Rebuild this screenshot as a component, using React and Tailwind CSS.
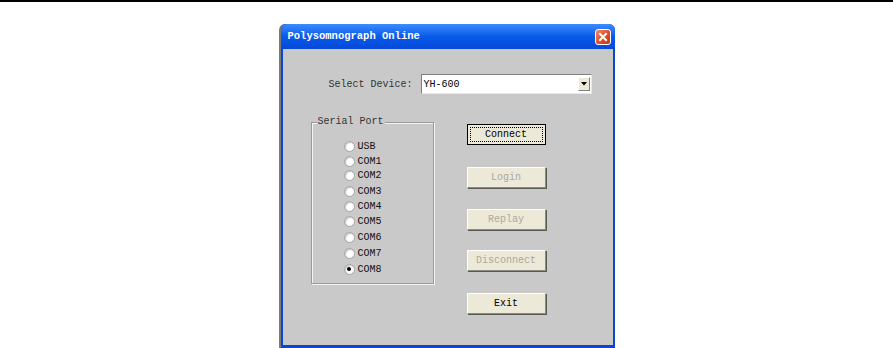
import React from 'react';

const PORTS = [
  { name: 'USB', row: 'h-[15px]' },
  { name: 'COM1', row: 'h-[14px]' },
  { name: 'COM2', row: 'h-[15px]' },
  { name: 'COM3', row: 'h-[16px]' },
  { name: 'COM4', row: 'h-[15px]' },
  { name: 'COM5', row: 'h-[15px]' },
  { name: 'COM6', row: 'h-[17px]' },
  { name: 'COM7', row: 'h-[15px]' },
  { name: 'COM8', row: 'h-[16px]', checked: true },
];

function Radio({ checked }) {
  return (
    <span className="w-[11px] h-[11px] rounded-full bg-white border border-[#a4a4a4] shadow-[inset_1px_1px_1px_#c4c4c4] flex items-center justify-center">
      {checked && <span className="w-[4px] h-[4px] rounded-full bg-black" />}
    </span>
  );
}

function XpButton({ label, disabled, isDefault, className }) {
  return (
    <div
      className={
        'w-[79px] h-[21px] flex items-center justify-center bg-[#ece9d8] text-[10px] ' +
        (isDefault
          ? 'border border-black p-[2px] '
          : 'border border-[#ffffff] border-r-[#8a8a80] border-b-[#8a8a80] shadow-[1px_1px_0_#5a5a55] ') +
        (disabled ? 'text-[#aca899] ' : 'text-black ') +
        (className || '')
      }
    >
      {isDefault ? (
        <div className="w-full h-full flex items-center justify-center border border-dotted border-black">
          {label}
        </div>
      ) : (
        label
      )}
    </div>
  );
}

export default function App() {
  return (
    <div className="w-[893px] h-[348px] bg-white overflow-hidden font-['Liberation_Mono',monospace]">
      <div className="h-[2px] bg-black" />
      <div className="pt-[22px] flex justify-center">
        <div className="w-[336px] h-[324px] flex flex-col bg-[#0b45d6] border-l-2 border-l-[#7a7a7a] rounded-t-[6px]">
          {/* title bar */}
          <div className="h-[25px] flex items-center justify-between pl-[7px] pr-[4px] rounded-t-[6px] bg-gradient-to-b from-[#3a8cff] via-[#0a5ae8] to-[#0648d8]">
            <span className="text-white font-bold text-[10.5px]">Polysomnograph Online</span>
            <span className="w-[16px] h-[16px] rounded-[3px] border border-white bg-gradient-to-br from-[#f08a6a] via-[#e2502a] to-[#c0391a] flex items-center justify-center">
              <svg width="10" height="10" viewBox="0 0 10 10">
                <path d="M2 2 L8 8 M8 2 L2 8" stroke="white" strokeWidth="2" strokeLinecap="square" />
              </svg>
            </span>
          </div>
          {/* client */}
          <div className="flex-1 mx-[2px] mb-[3px] bg-[#c9c9c9] flex flex-col text-[10px] text-[#111]">
            <div className="pt-[25px] pl-[46px] flex items-center h-[45px]">
              <span className="w-[92px] text-[#333]">Select Device:</span>
              <div className="w-[171px] h-[20px] bg-white border border-[#7f7f7f] border-r-[#e8e8e8] border-b-[#e8e8e8] flex items-center justify-between pl-[2px] pr-[1px]">
                <span className="text-black">YH-600</span>
                <span className="w-[12px] h-[14px] bg-[#ece9d8] border border-white border-r-[#808080] border-b-[#808080] flex items-center justify-center">
                  <svg width="6" height="4" viewBox="0 0 6 4">
                    <path d="M0 0 H6 L3 3.5 Z" fill="black" />
                  </svg>
                </span>
              </div>
            </div>
            <div className="flex pt-[28px]">
              <div className="ml-[28px] w-[123px] h-[162px] relative border border-[#9a9a9a] shadow-[1px_1px_0_#f4f4f4,inset_1px_1px_0_#f4f4f4]">
                <span className="absolute left-[5px] top-[-7px] px-[1px] bg-[#c9c9c9] leading-[12px] text-[#333]">Serial Port</span>
                <div className="pt-[16px] pl-[32px] flex flex-col">
                  {PORTS.map((p) => (
                    <div key={p.name} className={'flex items-center gap-[3px] ' + p.row}>
                      <Radio checked={p.checked} />
                      <span>{p.name}</span>
                    </div>
                  ))}
                </div>
              </div>
              <div className="ml-[33px] pt-[2px] flex flex-col">
                <XpButton label="Connect" isDefault />
                <XpButton label="Login" disabled className="mt-[22px]" />
                <XpButton label="Replay" disabled className="mt-[21px]" />
                <XpButton label="Disconnect" disabled className="mt-[20px]" />
                <XpButton label="Exit" className="mt-[22px]" />
              </div>
            </div>
          </div>
        </div>
      </div>
    </div>
  );
}
